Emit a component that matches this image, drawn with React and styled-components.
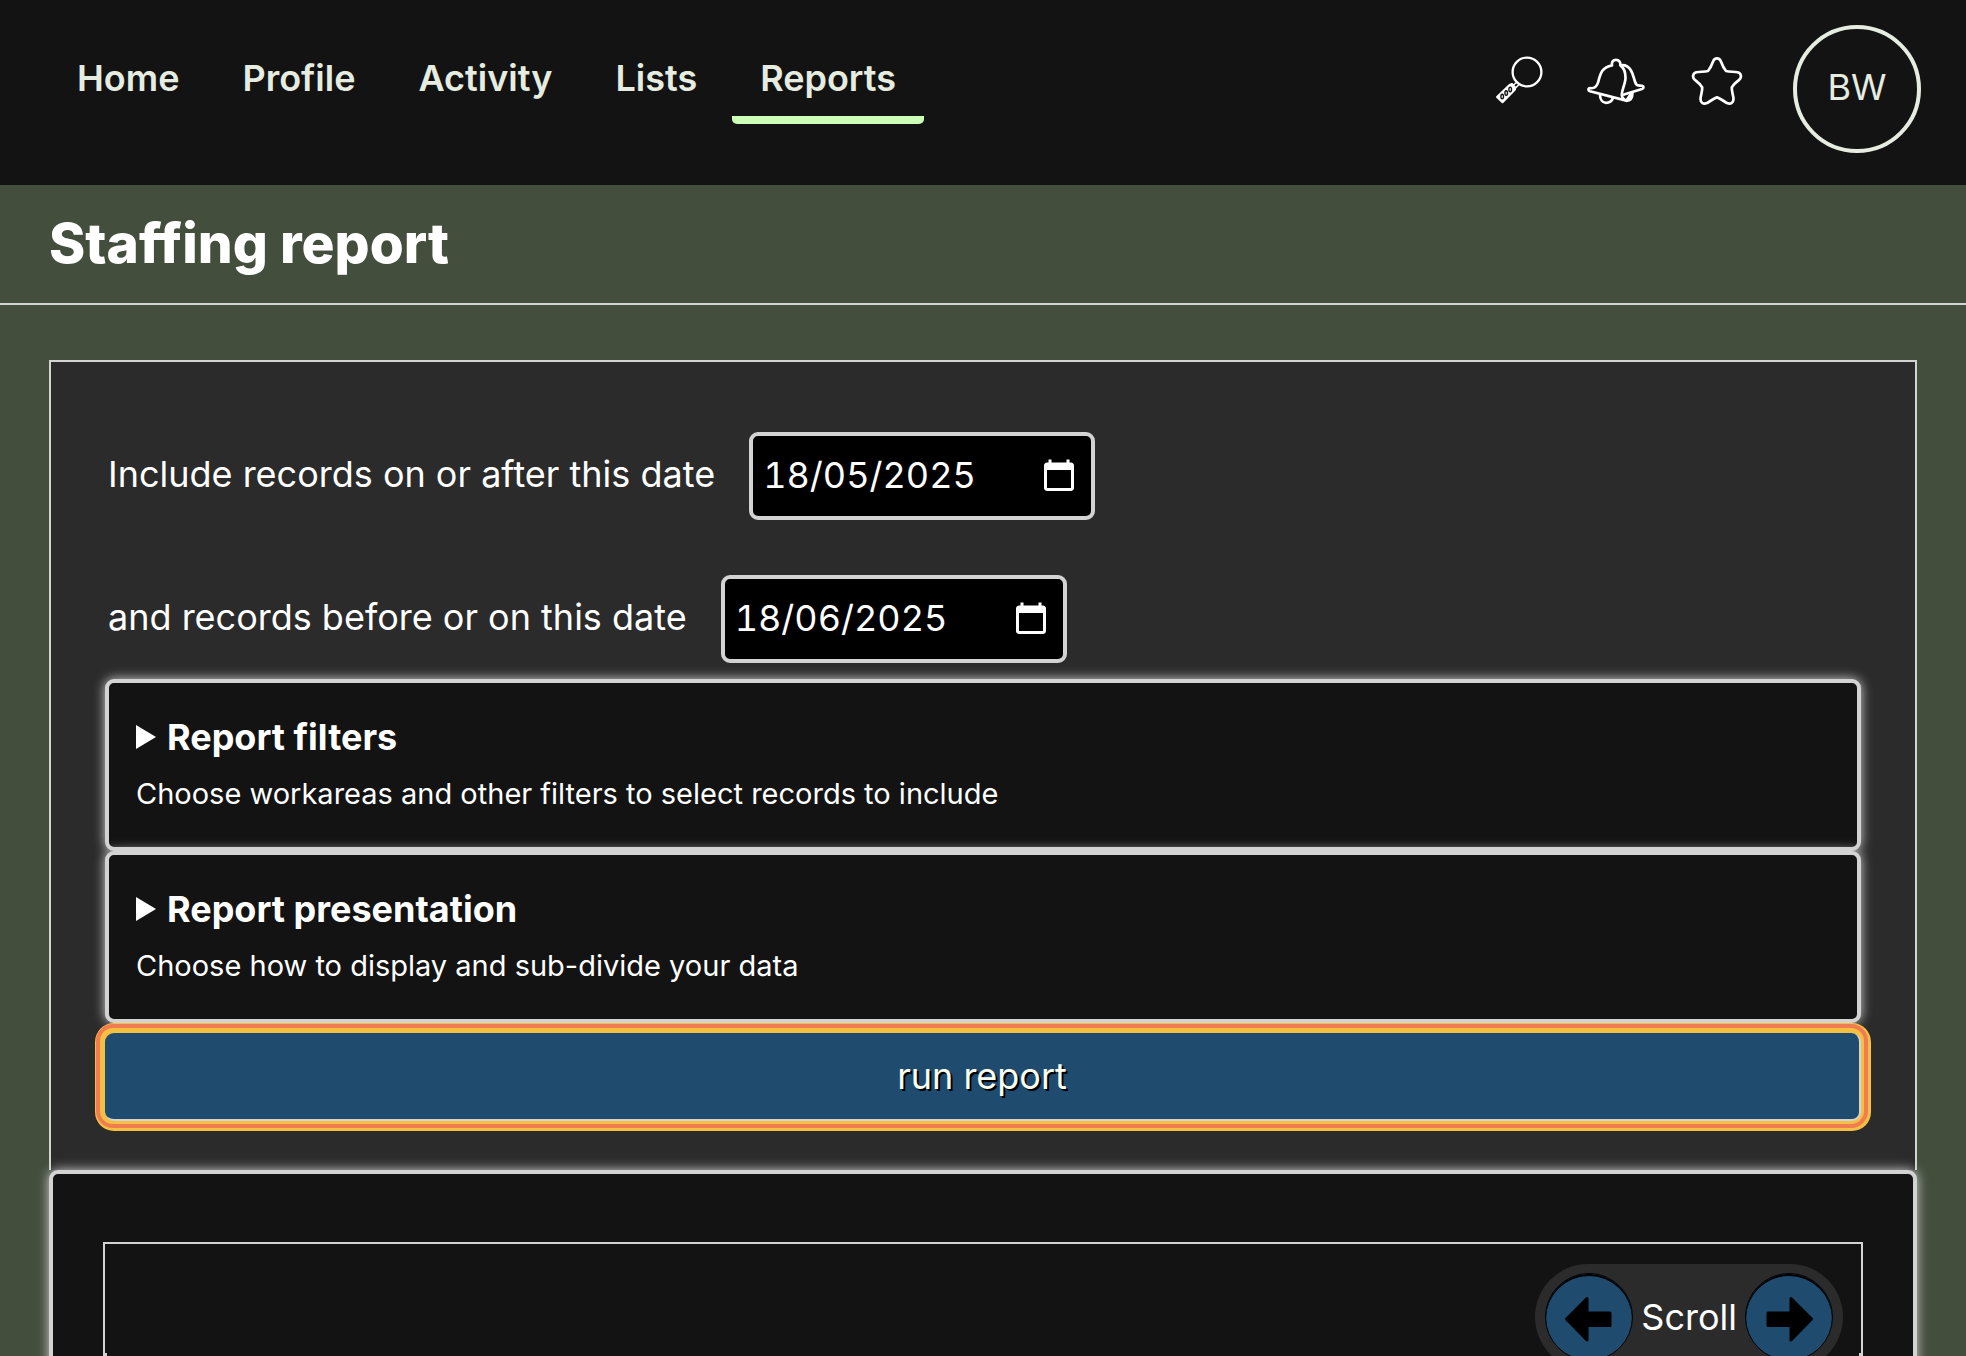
import React, { useState } from "react";
import styled, { createGlobalStyle } from "styled-components";

const ink = "#131313";
const panel = "#2b2b2b";
const moss = "#434e3d";
const line = "#d3d3d3";
const mist = "#e6ede0";
const blue = "#1e4b6e";
const amber = "#f5bf42";
const coral = "#f07c50";

const GlobalStyle = createGlobalStyle`
  *, *::before, *::after { box-sizing: border-box; }
  html { scrollbar-width: none; background: ${moss}; }
  body {
    margin: 0;
    background: ${moss};
    color: #fff;
    font-family: Inter, "Liberation Sans", sans-serif;
    font-size: 36px;
    line-height: 44px;
  }
  button, input { font: inherit; color: inherit; }
`;

const Header = styled.header`
  display: flex;
  justify-content: space-between;
  align-items: flex-start;
  min-height: 185px;
  padding: 25px 45px 25px 49px;
  background: ${ink};
  color: ${mist};
`;

const Nav = styled.nav`
  display: flex;
  gap: 7px;
  padding-top: 31px;
`;

const NavLink = styled.a`
  padding: 0 28px 16px;
  border-bottom: 8px solid ${(p) => (p.$active ? "#ccffb8" : "transparent")};
  border-radius: 0 0 5px 5px;
  color: inherit;
  font-weight: 600;
  text-decoration: none;
`;

const Tools = styled.div`
  display: flex;
  align-items: flex-start;
  gap: 40px;
`;

const IconButton = styled.button`
  display: block;
  width: 60px;
  height: 60px;
  margin-top: 25px;
  padding: 0;
  border: 0;
  background: none;
  color: #fff;
  cursor: pointer;
`;

const Avatar = styled.button`
  width: 128px;
  height: 128px;
  margin-left: 6px;
  padding: 0 0 4px;
  border: 4px solid ${mist};
  border-radius: 50%;
  background: none;
  color: ${mist};
`;

const TitleBar = styled.div`
  padding: 24px 49px 26px;
  border-bottom: 2px solid ${line};
`;

const Title = styled.h1`
  margin: 0;
  font-size: 55px;
  line-height: 68px;
  font-weight: 800;
`;

const Main = styled.main`
  padding: 55px 49px 0;
`;

const ReportForm = styled.form`
  display: flex;
  flex-direction: column;
  padding: 70px 54px 49px;
  border: 2px solid ${line};
  border-bottom: 0;
  background: ${panel};
`;

const Dates = styled.div`
  display: flex;
  flex-direction: column;
  gap: 55px;
  margin-bottom: 16px;
`;

const DateRow = styled.div`
  display: flex;
  align-items: center;
  gap: 34px;
  padding-left: 3px;
`;

const DateLabel = styled.label`
  padding-bottom: 4px;
`;

const DateBox = styled.div`
  display: flex;
  align-items: center;
  width: 346px;
  height: 88px;
  padding: 0 14px 0 10px;
  border: 4px solid ${line};
  border-radius: 9px;
  background: #000;
`;

const DateInput = styled.input`
  flex: 1;
  min-width: 0;
  padding: 0 0 2px;
  border: 0;
  outline: 0;
  background: none;
  font-variant-numeric: tabular-nums;
`;

const CalendarButton = styled.button`
  display: flex;
  padding: 0;
  border: 0;
  background: none;
  color: #fff;
`;

const Disclosure = styled.details`
  padding: 32px 27px 35px;
  border: 4px solid ${line};
  border-radius: 9px;
  background: ${ink};
  box-shadow: 0 0 12px ${line};
`;

const Summary = styled.summary`
  display: flex;
  flex-direction: column;
  gap: 17px;
  list-style: none;
  cursor: pointer;
`;

const SummaryTitle = styled.span`
  display: flex;
  align-items: center;
  gap: 11px;
  font-weight: 700;
`;

const SummaryHint = styled.span`
  font-size: 29px;
  line-height: 36px;
`;

const RunButton = styled.button`
  height: 88px;
  margin-top: 10px;
  padding: 0;
  border: 0 solid ${line};
  border-width: 0 2px 2px 0;
  border-radius: 9px;
  background: ${blue};
  color: #fffff0;
  text-shadow: 2px 2px 0 #000;
  box-shadow: -1px -1px 0 4px ${amber}, -1px -1px 0 8px ${coral}, 0 0 0 10px ${amber};
  cursor: pointer;
`;

const Results = styled.section`
  position: relative;
  padding: 68px 50px;
  border: 4px solid ${line};
  border-radius: 9px;
  background: ${ink};
  box-shadow: 0 0 12px ${line};
`;

const TableFrame = styled.div`
  display: flex;
  flex-direction: column;
  padding-top: 20px;
  border: 2px solid ${line};
`;

const Scroller = styled.div`
  display: flex;
  align-items: center;
  align-self: flex-end;
  gap: 8px;
  margin: 0 18px -17px;
  padding: 9px 10px;
  border-radius: 53px;
  background: ${panel};
`;

const ScrollButton = styled.button`
  width: 88px;
  height: 88px;
  padding: 0;
  border: 1px solid #000;
  border-radius: 50%;
  background: ${blue};
  box-shadow: inset 0 2px 0 #000;
  cursor: pointer;
`;

const TableArea = styled.div`
  height: 160px;
  border: 0 solid ${line};
  border-width: 0 2px;
`;

const stroke = {
  fill: "none",
  stroke: "currentColor",
  strokeWidth: 2.7,
  strokeLinecap: "round",
  strokeLinejoin: "round",
};

function SearchIcon() {
  return (
    <svg width="60" height="60" viewBox="0 0 60 60" aria-hidden="true" {...stroke}>
      <circle cx="40" cy="22" r="14.4" strokeWidth="2.3" />
      <path d="M25.5 36L30 32M28 38.5L32 34.5" strokeWidth="1.6" />
      <path d="M10 47L22.5 35L25 34L28 37.5L28 39.5L15.5 52.2Z" fill="currentColor" strokeWidth="2" />
      <g stroke="#131313" strokeWidth="1.4">
        <ellipse cx="15.2" cy="46.600" rx="1.3" ry="2.3" />
        <ellipse cx="19.2" cy="43" rx="1.3" ry="2.3" />
        <ellipse cx="23.2" cy="39.400" rx="1.3" ry="2.3" />
      </g>
    </svg>
  );
}

function BellsIcon() {
  return (
    <svg width="60" height="60" viewBox="0 0 60 60" aria-hidden="true" {...stroke}>
      <path d="M25 15.3C24.5 12 26 9.9 29 9.9S33.6 12 33.4 15.3C37 18 38.6 22 38.5 28C38.4 34 34.6 40 34.8 45C34.9 48 37 49.5 39.3 50.6L3 41.3C.8 40.6 1 38.2 3.2 38.2C8 38.6 10 36.5 11.2 32C13.4 24 14.5 17.3 25 15.3Z" />
      <path d="M34 15.3C38 14.8 41.5 16.5 44 20.5C47 25.5 47 30.5 49 34C50.5 36.3 52.5 35.3 55 35.8C57 36.4 57 38.3 55 39L37 44.5" />
      <path d="M13 44.5C13 49.5 15.5 52.800 19 52.800C22.5 52.800 24.8 51.3 26 48" />
      <path d="M45.5 42.500C45.5 47.500 43.5 50.800 39.3 50.800L43.500 44.500" />
    </svg>
  );
}

function StarIcon() {
  return (
    <svg width="60" height="60" viewBox="0 0 60 60" aria-hidden="true" {...stroke}>
      <path d="M26.3 11C27.5 7.5 32.5 7.5 33.7 11C35.2 15 36.5 18 39 21C43 22 46.5 21.5 50.5 22.3C54.5 23.2 55 27.5 52 30C49.5 32 46.5 34 44.8 37.3C44.5 41.5 46.3 45 46.5 49C46.5 53 43.5 54.5 40 53C36.5 51 34 49 30 47.3C26 49 23.5 51 20 53C16.5 54.5 13.5 53 13.5 49C13.7 45 15.5 41.5 15.2 37.3C13.5 34 10.5 32 8 30C5 27.5 5.5 23.2 9.5 22.3C13.5 21.5 17 22 21 21C23.5 18 24.8 15 26.3 11Z" />
    </svg>
  );
}

function CalendarIcon() {
  return (
    <svg width="36" height="36" viewBox="0 0 24 24" fill="currentColor" aria-hidden="true">
      <path d="M20 3h-1V1h-2v2H7V1H5v2H4c-1.1 0-2 .9-2 2v15c0 1.1.9 2 2 2h16c1.1 0 2-.9 2-2V5c0-1.1-.9-2-2-2zm0 17H4V8h16z" />
    </svg>
  );
}

function Triangle() {
  return (
    <svg width="20" height="24" viewBox="0 0 20 24" fill="currentColor" aria-hidden="true">
      <path d="M0 0L20 12L0 24Z" />
    </svg>
  );
}

function Arrow({ d }) {
  return (
    <svg width="86" height="86" viewBox="1 1 86 86" fill="#000" stroke="#000" strokeWidth="3" strokeLinejoin="round" aria-hidden="true">
      <path d={d} />
    </svg>
  );
}

function DateField({ id, label, initial }) {
  const [value, setValue] = useState(initial);
  return (
    <DateRow>
      <DateLabel htmlFor={id}>{label}</DateLabel>
      <DateBox>
        <DateInput id={id} value={value} onChange={(e) => setValue(e.target.value)} />
        <CalendarButton type="button" aria-label="Open calendar">
          <CalendarIcon />
        </CalendarButton>
      </DateBox>
    </DateRow>
  );
}

function Section({ title, hint }) {
  return (
    <Disclosure>
      <Summary>
        <SummaryTitle>
          <Triangle />
          {title}
        </SummaryTitle>
        <SummaryHint>{hint}</SummaryHint>
      </Summary>
    </Disclosure>
  );
}

const links = ["Home", "Profile", "Activity", "Lists", "Reports"];

export default function App() {
  return (
    <>
      <GlobalStyle />
      <Header>
        <Nav>
          {links.map((name) => (
            <NavLink key={name} href="#" $active={name === "Reports"}>
              {name}
            </NavLink>
          ))}
        </Nav>
        <Tools>
          <IconButton aria-label="Search"><SearchIcon /></IconButton>
          <IconButton aria-label="Notifications"><BellsIcon /></IconButton>
          <IconButton aria-label="Favourites"><StarIcon /></IconButton>
          <Avatar>BW</Avatar>
        </Tools>
      </Header>
      <TitleBar>
        <Title>Staffing report</Title>
      </TitleBar>
      <Main>
        <ReportForm onSubmit={(e) => e.preventDefault()}>
          <Dates>
            <DateField id="from" label="Include records on or after this date" initial="18/05/2025" />
            <DateField id="to" label="and records before or on this date" initial="18/06/2025" />
          </Dates>
          <Section title="Report filters" hint="Choose workareas and other filters to select records to include" />
          <Section title="Report presentation" hint="Choose how to display and sub-divide your data" />
          <RunButton type="submit">run report</RunButton>
        </ReportForm>
        <Results>
          <TableFrame>
            <Scroller>
              <ScrollButton aria-label="Scroll left">
                <Arrow d="M21.5 46L42 25.5V40H65V52.5H42V67Z" />
              </ScrollButton>
              <span>Scroll</span>
              <ScrollButton aria-label="Scroll right">
                <Arrow d="M66.5 46L46 25.5V40H23V52.5H46V67Z" />
              </ScrollButton>
            </Scroller>
            <TableArea />
          </TableFrame>
        </Results>
      </Main>
    </>
  );
}
